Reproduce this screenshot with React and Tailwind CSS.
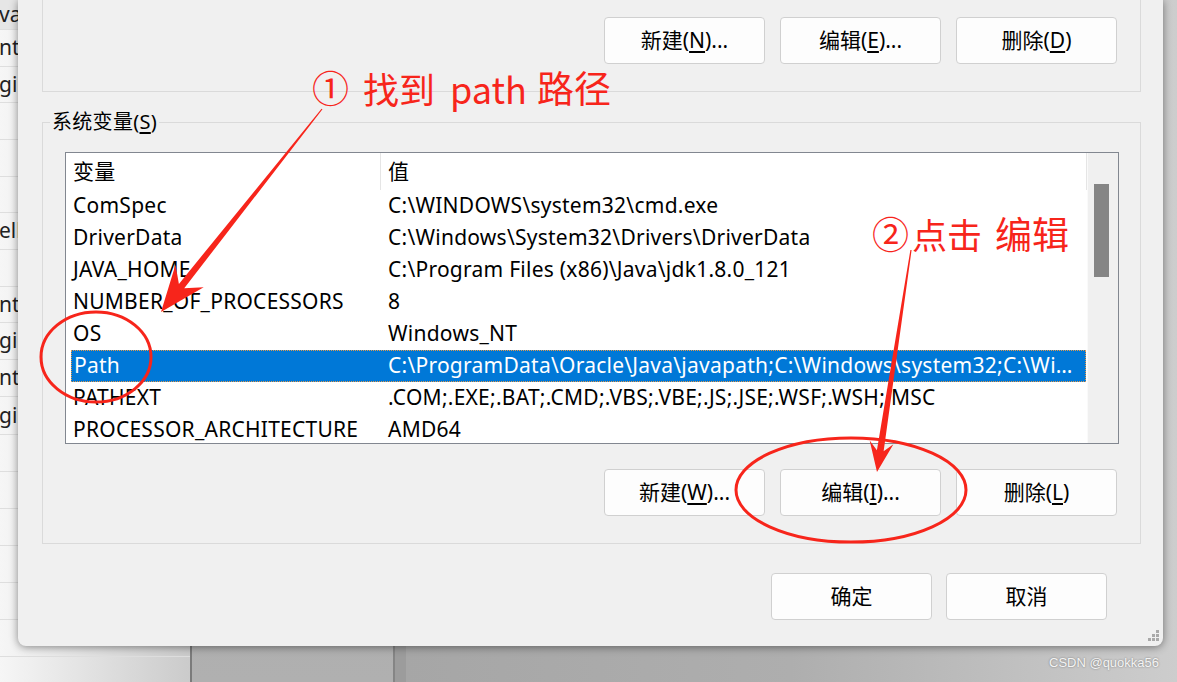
import React from 'react'

const RED = '#f7251b'

const rows = [
  ['ComSpec', 'C:\\WINDOWS\\system32\\cmd.exe'],
  ['DriverData', 'C:\\Windows\\System32\\Drivers\\DriverData'],
  ['JAVA_HOME', 'C:\\Program Files (x86)\\Java\\jdk1.8.0_121'],
  ['NUMBER_OF_PROCESSORS', '8'],
  ['OS', 'Windows_NT'],
  ['Path', 'C:\\ProgramData\\Oracle\\Java\\javapath;C:\\Windows\\system32;C:\\Windows;C:\\Windows\\System32\\Wbem'],
  ['PATHEXT', '.COM;.EXE;.BAT;.CMD;.VBS;.VBE;.JS;.JSE;.WSF;.WSH;.MSC'],
  ['PROCESSOR_ARCHITECTURE', 'AMD64'],
]

// rows of the window behind the dialog, only their first letters show
const behind = [
  { h: 30, t: 'va', bg: 'bg-[#e6e6e6]' },
  { h: 37, t: 'nt' },
  { h: 36, t: 'gir' },
  { h: 37, t: '' },
  { h: 37, t: '' },
  { h: 36, t: '' },
  { h: 37, t: 'ell', c: 'text-[#4a2a6a]' },
  { h: 37, t: '' },
  { h: 36, t: 'nt' },
  { h: 37, t: 'gir' },
  { h: 37, t: 'nt' },
  { h: 38, t: 'gir' },
  { h: 37, t: '' },
  { h: 37, t: '' },
  { h: 37, t: '' },
  { h: 37, t: '' },
  { h: 37, t: '' },
  { h: 37, t: '' },
]

function Btn({ children, className = '' }) {
  return (
    <button
      className={`w-[161px] h-[47px] rounded-[4px] border border-[#d0d0d0] bg-[#fdfdfd] text-[21px] text-black flex items-center justify-center ${className}`}
    >
      {children}
    </button>
  )
}

function Key({ children }) {
  return <span className="underline underline-offset-[3px]">{children}</span>
}

function Arrow({ sx, sy, tx, ty, len, wing }) {
  const dx = tx - sx
  const dy = ty - sy
  const l = Math.hypot(dx, dy)
  const ux = dx / l
  const uy = dy / l
  const nx = -uy
  const ny = ux
  const bx = tx - ux * len
  const by = ty - uy * len
  const kx = tx - ux * len * 0.72
  const ky = ty - uy * len * 0.72
  const pts = [
    [sx + nx * 0.6, sy + ny * 0.6],
    [kx + nx * 3.4, ky + ny * 3.4],
    [bx + nx * wing, by + ny * wing],
    [tx, ty],
    [bx - nx * wing, by - ny * wing],
    [kx - nx * 3.4, ky - ny * 3.4],
    [sx - nx * 0.6, sy - ny * 0.6],
  ]
  return <polygon points={pts.map((p) => p.join(',')).join(' ')} fill={RED} />
}

export default function App() {
  return (
    <div className="relative w-[1177px] h-[682px] overflow-hidden font-['Noto_Sans','Noto_Sans_CJK_SC',sans-serif] text-black">
      {/* desktop behind the dialog */}
      <div className="absolute inset-0 flex">
        <div className="w-[190px] h-full flex flex-col bg-gradient-to-r from-[#f6f6f6] to-[#cbcbcb]">
          {behind.map((r, i) => (
            <div
              key={i}
              style={{ height: r.h }}
              className={`shrink-0 border-b border-[#dedede] flex items-center overflow-hidden whitespace-nowrap text-[21px] text-[#222] ${r.bg || ''} ${r.c || ''}`}
            >
              <span className="-ml-[1px]">{r.t}</span>
            </div>
          ))}
        </div>
        <div className="w-[2px] bg-[#7b7b7b]" />
        <div className="w-[201px] bg-gradient-to-b from-[#a2a2a2] to-[#b0b0b0]" />
        <div className="w-[2px] bg-[#858585]" />
        <div className="w-[11px] bg-[#9c9c9c]" />
        <div className="flex-1 bg-gradient-to-r from-[#a6a6a6] via-[#aeaeae] to-[#cdcdcd]" />
      </div>

      {/* dialog */}
      <div className="absolute left-[18px] top-0 w-[1145px] h-[646px] bg-[#f0f0f0] rounded-b-[8px] shadow-[0_1px_8px_rgba(0,0,0,0.45)] pl-[24px] pr-[22px]">
        {/* user variables group (cut off at top) */}
        <div className="h-[92px] border-x border-b border-[#dadada] pt-[17px] pr-[23px] flex justify-end gap-[15px]">
          <Btn>新建(<Key>N</Key>)...</Btn>
          <Btn>编辑(<Key>E</Key>)...</Btn>
          <Btn>删除(<Key>D</Key>)</Btn>
        </div>

        {/* system variables group */}
        <div className="relative mt-[30px] h-[422px] border border-[#dadada] pt-[29px] pl-[22px] pr-[21px]">
          <div className="absolute left-[7px] -top-[15px] px-[2px] bg-[#f0f0f0] text-[20px] tracking-[0.3px] leading-[28px]">
            系统变量(<Key>S</Key>)
          </div>

          <div className="h-[292px] border border-[#828790] bg-white flex overflow-hidden text-[21px] tracking-[0.25px]">
            <div className="w-[1021px] overflow-hidden">
              <div className="flex h-[37px]">
                <div className="w-[315px] border-r border-[#e5e5e5] pl-[7px] flex items-center">变量</div>
                <div className="w-[706px] border-r border-[#e5e5e5] pl-[7px] flex items-center">值</div>
              </div>
              {rows.map(([name, value]) =>
                name === 'Path' ? (
                  <div
                    key={name}
                    className="ml-[5px] w-[1015px] h-[32px] flex bg-[#0078d7] text-white border border-dotted border-[#e59a4a]"
                  >
                    <div className="w-[309px] pl-[2px] flex items-center whitespace-nowrap">{name}</div>
                    <div className="w-[704px] pl-[7px] pr-[4px] flex items-center min-w-0">
                      <span className="truncate">{value}</span>
                    </div>
                  </div>
                ) : (
                  <div key={name} className="flex h-[32px] whitespace-nowrap">
                    <div className="w-[315px] pl-[7px] flex items-center">{name}</div>
                    <div className="w-[706px] pl-[7px] flex items-center">{value}</div>
                  </div>
                )
              )}
            </div>
            <div className="w-[31px] bg-[#f0f0f0] border-l border-[#fafafa] pl-[6px] pt-[31px]">
              <div className="w-[15px] h-[93px] bg-[#858585]" />
            </div>
          </div>

          <div className="mt-[25px] pr-[2px] flex justify-end gap-[15px]">
            <Btn>新建(<Key>W</Key>)...</Btn>
            <Btn>编辑(<Key>I</Key>)...</Btn>
            <Btn>删除(<Key>L</Key>)</Btn>
          </div>
        </div>

        <div className="mt-[29px] pr-[34px] flex justify-end gap-[14px]">
          <Btn className="border-[#0067c0]">确定</Btn>
          <Btn>取消</Btn>
        </div>

        {/* resize grip */}
        <svg className="absolute right-[3px] bottom-[3px]" width="14" height="14" viewBox="0 0 14 14">
          {[
            [10, 1], [6, 5], [10, 5], [2, 9], [6, 9], [10, 9],
          ].map(([x, y]) => (
            <rect key={`${x}-${y}`} x={x} y={y} width="3" height="3" fill="#a9a9a9" />
          ))}
        </svg>
      </div>

      {/* red annotations */}
      <svg className="absolute inset-0 pointer-events-none" width="1177" height="682">
        <ellipse cx="96" cy="357" rx="55" ry="45" fill="none" stroke={RED} strokeWidth="3" />
        <ellipse cx="851" cy="490" rx="115" ry="52" fill="none" stroke={RED} strokeWidth="3" />
        <Arrow sx={322} sy={109} tx={161} ty={312} len={46} wing={18} />
        <Arrow sx={911} sy={250} tx={877} ty={472} len={30} wing={12} />
      </svg>
      <div
        className="absolute left-[312px] top-[69px] flex items-center text-[36px] leading-none whitespace-nowrap font-['Noto_Sans_CJK_SC',sans-serif]"
        style={{ color: RED }}
      >
        <span className="text-[37px]">①</span>
        <span className="ml-[14px]">找到</span>
        <span className="ml-[15px]">path</span>
        <span className="ml-[10px] text-[37px]">路径</span>
      </div>
      <div
        className="absolute left-[872px] top-[215px] flex items-center text-[37px] leading-none whitespace-nowrap font-['Noto_Sans_CJK_SC',sans-serif]"
        style={{ color: RED }}
      >
        <span>②</span>
        <span className="ml-[3px] text-[35px]">点击</span>
        <span className="ml-[13px]">编辑</span>
      </div>

      <div className="absolute left-[1049px] top-[653px] text-[13px] font-['Liberation_Sans',sans-serif] text-[#f4f4f4] [text-shadow:0_0_2px_rgba(0,0,0,0.45)]">
        CSDN @quokka56
      </div>
    </div>
  )
}
